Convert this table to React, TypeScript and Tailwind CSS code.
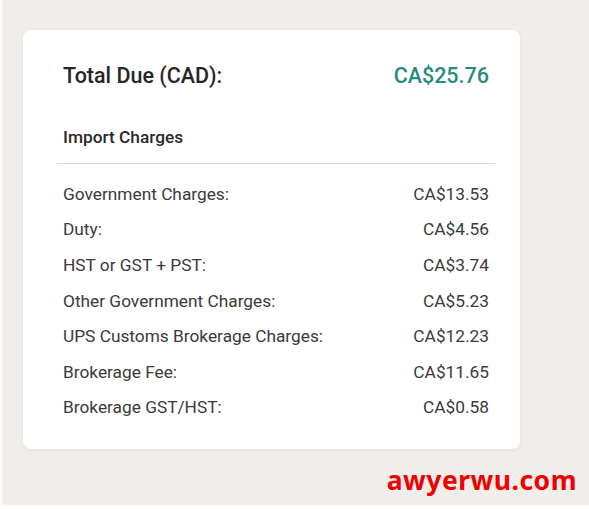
const rows: [string, string][] = [
  ['Government Charges:', 'CA$13.53'],
  ['Duty:', 'CA$4.56'],
  ['HST or GST + PST:', 'CA$3.74'],
  ['Other Government Charges:', 'CA$5.23'],
  ['UPS Customs Brokerage Charges:', 'CA$12.23'],
  ['Brokerage Fee:', 'CA$11.65'],
  ['Brokerage GST/HST:', 'CA$0.58'],
];

export default function App() {
  return (
    <div className="w-[589px] h-[509px] bg-white" style={{ fontFamily: 'Roboto, "Liberation Sans", sans-serif' }}>
      <div className="h-[505px] ml-[2px] bg-[#f0edea] flex flex-col">
        {/* Charges card */}
        <div className="ml-[21px] mt-[30px] w-[497px] h-[419px] rounded-lg bg-white shadow-[0_1px_4px_rgba(0,0,0,0.06)] pl-[34px] pr-[25px] pt-[34px]">
          <div className="h-[24px] px-[6px] flex items-center justify-between text-[21.5px] font-medium">
            <span className="text-[#262626]">Total Due (CAD):</span>
            <span className="text-[#2b8a7f]">CA$25.76</span>
          </div>
          <div className="mt-[40px] h-[20px] px-[6px] flex items-center text-[17.3px] font-medium text-[#2a2a2a]">
            Import Charges
          </div>
          <div className="mt-[15px] h-px bg-[#d4d4d4]" />
          <div className="mt-[13px] px-[6px]">
            {rows.map(([label, value]) => (
              <div key={label} className="h-[35.6px] flex items-center justify-between text-[17.3px] text-[#3a3a3a]">
                <span>{label}</span>
                <span>{value}</span>
              </div>
            ))}
          </div>
        </div>
        <div className="mt-auto mb-[4px] mr-[12px] self-end text-[26.5px] font-bold text-[#f00000] tracking-[0.5px]" style={{ fontFamily: '"Noto Sans", "Open Sans", sans-serif' }}>
          awyerwu.com
        </div>
      </div>
    </div>
  );
}
